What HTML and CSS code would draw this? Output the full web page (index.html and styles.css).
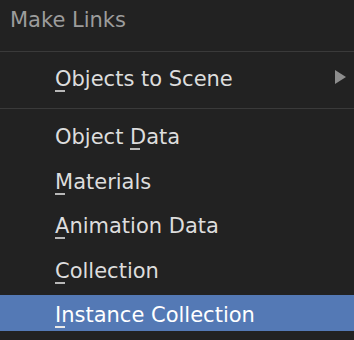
FILE: index.html
```html
<!DOCTYPE html>
<html lang="en">
<head>
  <meta charset="UTF-8">
  <title>Make Links</title>
  <link rel="stylesheet" href="styles.css">
</head>
<body>
  <div class="menu">
    <div class="menu-title">Make Links</div>
    <div class="separator"></div>

    <div class="menu-group first">
      <div class="menu-item has-sub">
        <span class="label"><span class="key">O</span>bjects to Scene</span>
        <svg class="arrow" width="11" height="14" viewBox="0 0 11 14"><polygon points="0,0 11,7 0,14" fill="#8d8d8d"/></svg>
      </div>
    </div>
    <div class="separator"></div>

    <div class="menu-group">
      <div class="menu-item"><span class="label">Object <span class="key">D</span>ata</span></div>
      <div class="menu-item"><span class="label"><span class="key">M</span>aterials</span></div>
      <div class="menu-item"><span class="label"><span class="key">A</span>nimation Data</span></div>
      <div class="menu-item"><span class="label"><span class="key">C</span>ollection</span></div>
      <div class="menu-item active"><span class="label"><span class="key">I</span>nstance Collection</span></div>
    </div>
  </div>
</body>
</html>
```
FILE: styles.css
```css
body {
  margin: 0;
  padding: 0;
  background-color: #222222;
  font-family: 'DejaVu Sans', 'Noto Sans', sans-serif;
  font-size: 21px;
  color: #dddddd;
}

.menu {
  width: 354px;
  height: 340px;
  overflow: hidden;
}

.menu-title {
  height: 40px;
  line-height: 40px;
  padding-left: 10px;
  margin-bottom: 11px;
  color: #9c9c9c;
}

.separator {
  height: 1px;
  background-color: #3a3a3a;
}

.menu-group {
  display: flex;
  flex-direction: column;
  gap: 8.4px;
  padding-top: 8.4px;
}

.menu-group.first {
  padding-top: 7px;
  padding-bottom: 13px;
}

.menu-item {
  height: 36px;
  box-sizing: border-box;
  padding: 4px 8px 0 55px;
  line-height: 32px;
  display: flex;
  align-items: center;
  justify-content: space-between;
}

.menu-item.has-sub .arrow {
  margin-top: -4px;
}

.menu-item.active {
  background-color: #5479b5;
  color: #ffffff;
}

.key {
  position: relative;
}

.key::after {
  content: '';
  position: absolute;
  left: 0;
  width: 10px;
  height: 2px;
  bottom: -1px;
  background-color: #b8b8b8;
}

.menu-item.active .key::after {
  background-color: #e8e8e8;
}
```
